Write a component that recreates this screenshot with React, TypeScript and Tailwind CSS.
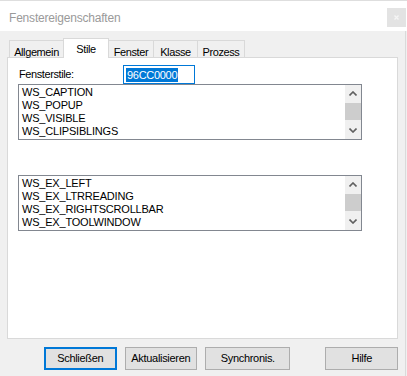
import React from 'react';

const styles = ['WS_CAPTION', 'WS_POPUP', 'WS_VISIBLE', 'WS_CLIPSIBLINGS'];
const exStyles = ['WS_EX_LEFT', 'WS_EX_LTRREADING', 'WS_EX_RIGHTSCROLLBAR', 'WS_EX_TOOLWINDOW'];

const tabs = [
  { label: 'Allgemein', w: 'w-[55px]' },
  { label: 'Stile', w: 'w-[46px]', active: true },
  { label: 'Fenster', w: 'w-[46px]' },
  { label: 'Klasse', w: 'w-[45px]' },
  { label: 'Prozess', w: 'w-[48px]' },
];

function Chevron({ up }: { up?: boolean }) {
  return (
    <svg width="8" height="5" viewBox="0 0 8 5">
      <path
        d={up ? 'M0.5 4.5 L4 1 L7.5 4.5' : 'M0.5 0.5 L4 4 L7.5 0.5'}
        fill="none"
        stroke="#606060"
        strokeWidth="1.6"
      />
    </svg>
  );
}

function ListBox({ items }: { items: string[] }) {
  return (
    <div className="w-[344px] h-[56px] border border-[#828790] bg-white flex">
      <div className="flex-1 pl-[3px] pt-px text-[11px] leading-[13px] tracking-[-0.2px] text-black">
        {items.map((it) => (
          <div key={it}>{it}</div>
        ))}
      </div>
      {/* scrollbar */}
      <div className="w-[16px] bg-[#f0f0f0] flex flex-col">
        <div className="h-[17px] flex items-center justify-center">
          <Chevron up />
        </div>
        <div className="h-[17px] mt-px bg-[#cdcdcd]"></div>
        <div className="flex-1"></div>
        <div className="h-[17px] flex items-center justify-center">
          <Chevron />
        </div>
      </div>
    </div>
  );
}

export default function App() {
  return (
    <div className="w-[407px] h-[376px] bg-[#f0f0f0] border-t border-[#dedede] flex flex-col font-['Liberation_Sans',Arial,sans-serif] text-black overflow-hidden">
      {/* TITLE BAR */}
      <div className="h-[30px] bg-white flex items-start pl-[9px] pr-px">
        <span className="mt-[8px] text-[12px] tracking-[-0.2px] text-[#9a9a9a]">Fenstereigenschaften</span>
        <div className="ml-auto mt-[7px] w-[19px] h-[19px] bg-[#e3e3e3] flex items-center justify-center">
          <svg width="5" height="5" viewBox="0 0 5 5">
            <path d="M0.5 0.5 L4.5 4.5 M4.5 0.5 L0.5 4.5" stroke="#f5f5f5" strokeWidth="1.3" />
          </svg>
        </div>
      </div>

      {/* BODY */}
      <div className="flex-1 w-[406px] border-r border-[#dadada] px-[7px] pt-[7px]">
        {/* TABS */}
        <div className="h-[19px] flex items-end pl-[2px]">
          {tabs.map((tab, i) =>
            tab.active ? (
              <div
                key={tab.label}
                className={`${tab.w} ${i > 0 ? '-ml-px' : ''} h-[20px] -mb-px relative z-10 bg-white border border-b-0 border-[#d9d9d9] text-[11px] tracking-[-0.4px] flex justify-center pt-[2px]`}
              >
                {tab.label}
              </div>
            ) : (
              <div
                key={tab.label}
                className={`${tab.w} ${i > 0 ? '-ml-px' : ''} h-[17px] bg-[#f0f0f0] border border-b-0 border-[#d9d9d9] text-[11px] tracking-[-0.4px] flex justify-center pt-[3px]`}
              >
                {tab.label}
              </div>
            )
          )}
        </div>

        {/* PANEL */}
        <div className="h-[282px] bg-white border border-[#d9d9d9] pl-[10px]">
          <div className="mt-[7px] h-[19px] flex items-center">
            <span className="w-[105px] pl-px text-[11px] tracking-[-0.4px]">Fensterstile:</span>
            <div className="w-[72px] h-[19px] border border-[#0078d7] flex items-center pl-[2px]">
              <span className="bg-[#0078d7] text-white text-[11px] leading-[14px] tracking-[-0.3px] px-px">96CC0000</span>
            </div>
          </div>
          <ListBox items={styles} />
          <div className="mt-[35px]">
            <ListBox items={exStyles} />
          </div>
        </div>

        {/* BUTTONS */}
        <div className="mt-[8px] flex pl-[37px] text-[11px] tracking-[-0.3px]">
          <button className="w-[73px] h-[23px] bg-[#e1e1e1] border-2 border-[#0078d7] flex items-center justify-center">
            Schließen
          </button>
          <button className="ml-[8px] w-[73px] h-[23px] bg-[#e1e1e1] border border-[#adadad] flex items-center justify-center">
            Aktualisieren
          </button>
          <button className="ml-[8px] w-[86px] h-[23px] bg-[#e1e1e1] border border-[#adadad] flex items-center justify-center">
            Synchronis.
          </button>
          <button className="ml-[35px] w-[73px] h-[23px] bg-[#e1e1e1] border border-[#adadad] flex items-center justify-center">
            Hilfe
          </button>
        </div>
      </div>
    </div>
  );
}
